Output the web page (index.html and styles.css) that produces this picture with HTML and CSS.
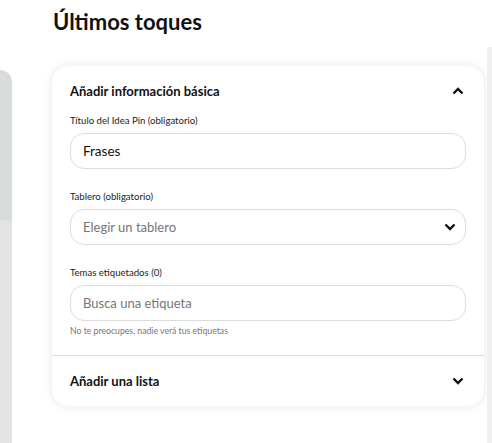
FILE: index.html
```html
<!DOCTYPE html>
<html lang="es">
<head>
<meta charset="utf-8">
<link rel="stylesheet" href="styles.css">
</head>
<body>
<div class="page">
  <div class="side-left">
    <div class="preview-top"></div>
    <div class="preview-bottom"></div>
  </div>
  <main class="main">
    <h1 class="title">Últimos toques</h1>
    <section class="card">
      <div class="card-head first">
        <span>Añadir información básica</span>
        <svg class="chev" width="12" height="8" viewBox="0 0 12 8"><path d="M1.5 6.5 L6 2 L10.5 6.5" fill="none" stroke="#111" stroke-width="2.4"/></svg>
      </div>
      <div class="card-body">
        <label class="label">Título del Idea Pin (obligatorio)</label>
        <div class="field"><span class="value">Frases</span></div>
        <label class="label gap">Tablero (obligatorio)</label>
        <div class="field select"><span class="ph">Elegir un tablero</span>
          <svg class="chev" width="12" height="8" viewBox="0 0 12 8"><path d="M1.5 1.5 L6 6 L10.5 1.5" fill="none" stroke="#111" stroke-width="2.4"/></svg>
        </div>
        <label class="label gap">Temas etiquetados (0)</label>
        <div class="field"><span class="ph">Busca una etiqueta</span></div>
        <p class="help">No te preocupes, nadie verá tus etiquetas</p>
      </div>
      <div class="card-head second">
        <span>Añadir una lista</span>
        <svg class="chev" width="12" height="8" viewBox="0 0 12 8"><path d="M1.5 1.5 L6 6 L10.5 1.5" fill="none" stroke="#111" stroke-width="2.4"/></svg>
      </div>
    </section>
  </main>
  <div class="side-right"></div>
</div>
</body>
</html>
```
FILE: styles.css
```css
* { box-sizing: border-box; }
html, body { margin: 0; padding: 0; background: #fff; }
body {
  font-family: Lato, "Noto Sans", sans-serif;
  color: #111;
  width: 492px;
  height: 443px;
  overflow: hidden;
}
.page {
  display: flex;
  height: 443px;
}
.side-left {
  width: 12px;
  margin-top: 70px;
  display: flex;
  flex-direction: column;
  border-top-right-radius: 12px;
  overflow: hidden;
  flex: none;
}
.preview-top { height: 150px; background: #d7dcd9; }
.preview-bottom { flex: 1; background: #e3e3e1; }
.main {
  width: 432px;
  margin-left: 40px;
  flex: none;
}
.title {
  margin: 9px 0 0 1px;
  font-size: 22px;
  line-height: 26px;
  font-weight: 700;
  color: #111;
}
.card {
  margin-top: 31px;
  background: #fff;
  border-radius: 16px;
  box-shadow: 0 0 8px rgba(0,0,0,0.1);
}
.card-head {
  display: flex;
  justify-content: space-between;
  align-items: center;
  padding: 16px 20px 16px 18px;
  font-size: 13px;
  line-height: 18px;
  font-weight: 700;
}
.card-head.first { padding-bottom: 0; }
.card-head.second { border-top: 1px solid #ddd; }
.card-body {
  padding: 0 18px 18px 18px;
  display: flex;
  flex-direction: column;
}
.label {
  display: block;
  margin-top: 14px;
  font-size: 9.6px;
  line-height: 14px;
  color: #222;
}
.label.gap { margin-top: 21px; }
.field {
  margin-top: 5px;
  height: 36px;
  border: 1px solid #dcdcdc;
  border-radius: 14px;
  display: flex;
  align-items: center;
  justify-content: space-between;
  padding: 0 9px 0 12px;
  font-size: 13px;
}
.value { color: #111; font-size: 13.5px; }
.ph { color: #767676; }
.help {
  margin: 4px 0 0 0;
  font-size: 8.7px;
  line-height: 12px;
  color: #767676;
}
.side-right {
  width: 5px;
  margin-left: 3px;
  margin-top: 47px;
  background: #f0f0f0;
  flex: none;
}
```
